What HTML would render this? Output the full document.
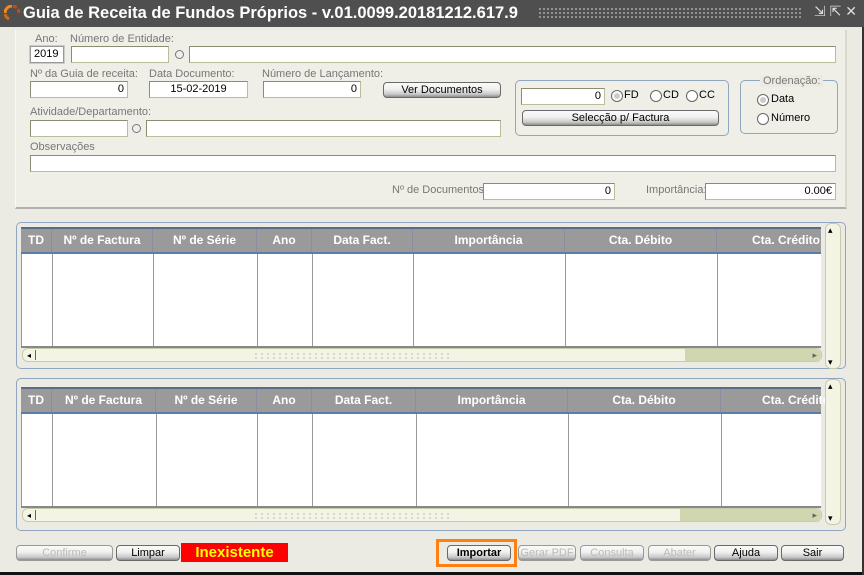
<!DOCTYPE html>
<html><head><meta charset="utf-8"><style>
*{box-sizing:border-box;margin:0;padding:0}
body{width:864px;height:575px;overflow:hidden;background:#ecebe3;font-family:"Liberation Sans",sans-serif;font-size:11px;color:#000;position:relative}
.a{position:absolute}
.tb{left:0;top:0;width:864px;height:27px;background:#4f4f4f;color:#fff}
.lbl{position:absolute;font-size:11px;color:#777}
.in{position:absolute;background:#fff;border:1px solid #b9bd99;border-top-color:#8a8d70;border-left-color:#8a8d70;height:17px;font-size:11px;text-align:right;padding:1px 3px;line-height:13px}
.btn{position:absolute;height:16px;border:1px solid #6a6a6a;border-radius:4px;background:linear-gradient(#fafafa 0%,#f0f0f0 45%,#c8c8c8 80%,#8d8d8d 100%);text-align:center;font-size:11px;line-height:14px}
.dis{color:#bbb;border-color:#999}
.circ{position:absolute;width:9px;height:9px;border:1px solid #777;border-radius:50%;background:#eee}
.rad{position:absolute;width:12px;height:12px;border:1px solid #666;border-radius:50%;background:#fff}
.rad.on::after{content:"";position:absolute;left:2px;top:2px;width:6px;height:6px;border-radius:50%;background:#ccc}
.grp{position:absolute;border:1px solid #8fa5c0;border-radius:5px}
.hdr{position:absolute;background:#9a9a9a;color:#fff;font-weight:bold;font-size:12px;border-top:2px solid #5a6c88;border-bottom:2px solid #5a7eaa}
.hdr span{position:absolute;text-align:center;border-right:1px solid #8a8fa0;height:23px;top:0;line-height:22px}
.body{position:absolute;background:#fff;border-bottom:2px solid #888}
.body i{position:absolute;top:0;bottom:0;width:1px;background:#999}
.hs{position:absolute;background:#f4f4e4;border:1px solid #c8cba8;border-radius:6px}
.vs{position:absolute;background:#f4f4e4;border:1px solid #c8cba8;border-radius:6px}
</style></head><body>
<div class="a tb">
 <svg class="a" style="left:4px;top:5px" width="16" height="16" viewBox="0 0 16 16"><path d="M8 1 A7 7 0 0 0 1 8" stroke="#f08a20" stroke-width="3" fill="none"/><path d="M15 8 A7 7 0 0 0 8 1" stroke="#c05010" stroke-width="3" fill="none" stroke-dasharray="4 2"/><path d="M1 9 A7 7 0 0 0 5 14" stroke="#d06a18" stroke-width="3" fill="none"/></svg>
 <div class="a" style="left:23px;top:4px;font-family:'Liberation Sans',sans-serif;font-weight:bold;font-size:16.5px;letter-spacing:0px;white-space:nowrap">Guia de Receita de Fundos Próprios - v.01.0099.20181212.617.9</div>
 <div class="a" style="left:538px;top:7px;width:265px;height:12px;background-image:radial-gradient(#aaa 0.8px,transparent 1px);background-size:4px 4px"></div>
 <div class="a" style="left:814px;top:3px;font-size:14px;color:#ddd">⇲ ⇱ ✕</div>
</div>
<div class="a" style="left:15px;top:30px;width:832px;height:179px;background:#efeee7;border-left:1px solid #fafaf5;border-bottom:2px solid #b0b0b0;border-right:2px solid #d8d8d0"></div>

<div class="lbl" style="left:35px;top:33px">Ano:</div>
<div class="lbl" style="left:70px;top:33px">Número de Entidade:</div>
<div class="in" style="left:30px;top:46px;width:34px;text-align:left;border:1px solid #999;outline:1px solid #ccc">2019</div>
<div class="in" style="left:71px;top:46px;width:98px"></div>
<div class="circ" style="left:175px;top:50px"></div>
<div class="in" style="left:189px;top:46px;width:647px"></div>

<div class="lbl" style="left:30px;top:68px">Nº da Guia de receita:</div>
<div class="lbl" style="left:149px;top:68px">Data Documento:</div>
<div class="lbl" style="left:262px;top:68px">Número de Lançamento:</div>
<div class="in" style="left:30px;top:81px;width:98px">0</div>
<div class="in" style="left:149px;top:81px;width:99px;text-align:center">15-02-2019</div>
<div class="in" style="left:263px;top:81px;width:98px">0</div>
<div class="btn" style="left:383px;top:82px;width:118px">Ver Documentos</div>

<div class="grp" style="left:515px;top:80px;width:214px;height:56px"></div>
<div class="in" style="left:521px;top:88px;width:84px">0</div>
<div class="rad on" style="left:611px;top:90px"></div><div class="a" style="left:624px;top:89px">FD</div>
<div class="rad" style="left:650px;top:90px"></div><div class="a" style="left:663px;top:89px">CD</div>
<div class="rad" style="left:686px;top:90px"></div><div class="a" style="left:699px;top:89px">CC</div>
<div class="btn" style="left:522px;top:110px;width:197px">Selecção p/ Factura</div>

<div class="grp" style="left:740px;top:80px;width:98px;height:54px"></div>
<div class="a" style="left:760px;top:75px;background:#ecebe3;padding:0 3px;color:#777;font-size:11px">Ordenação:</div>
<div class="rad on" style="left:757px;top:94px"></div><div class="a" style="left:771px;top:93px">Data</div>
<div class="rad" style="left:757px;top:113px"></div><div class="a" style="left:771px;top:112px">Número</div>

<div class="lbl" style="left:30px;top:106px">Atividade/Departamento:</div>
<div class="in" style="left:30px;top:120px;width:98px"></div>
<div class="circ" style="left:132px;top:124px"></div>
<div class="in" style="left:146px;top:120px;width:355px"></div>

<div class="lbl" style="left:30px;top:141px">Observações</div>
<div class="in" style="left:30px;top:155px;width:806px"></div>

<div class="lbl" style="left:392px;top:184px">Nº de Documentos</div>
<div class="in" style="left:483px;top:183px;width:132px">0</div>
<div class="lbl" style="left:646px;top:184px">Importância:</div>
<div class="in" style="left:705px;top:183px;width:131px">0.00€</div>

<!-- table 1 -->
<div class="grp" style="left:16px;top:222px;width:830px;height:147px"></div>
<div class="hdr" style="left:21px;top:227px;width:800px;height:27px">
<span style="left:0;width:31px">TD</span><span style="left:31px;width:101px">Nº de Factura</span><span style="left:132px;width:104px">Nº de Série</span><span style="left:236px;width:55px">Ano</span><span style="left:291px;width:101px">Data Fact.</span><span style="left:392px;width:152px">Importância</span><span style="left:544px;width:152px">Cta. Débito</span><span style="left:696px;width:130px;text-align:left;padding-left:35px;border:0">Cta. Crédito</span></div>
<div class="body" style="left:21px;top:254px;width:800px;height:94px"><i style="left:0"></i><i style="left:31px"></i><i style="left:132px"></i><i style="left:236px"></i><i style="left:291px"></i><i style="left:392px"></i><i style="left:544px"></i><i style="left:696px"></i></div>
<div class="hs" style="left:22px;top:348px;width:800px;height:14px"><div class="a" style="left:4px;top:2px;font-size:8px">◂</div><div class="a" style="left:12px;top:1px;width:1px;height:10px;background:#666"></div><div class="a" style="left:662px;top:0;right:0;bottom:0;background:#d0d6b0;border-radius:0 6px 6px 0"></div><div class="a" style="left:230px;top:3px;width:200px;height:7px;background-image:radial-gradient(#aaa 0.7px,transparent 1px);background-size:6px 4px"></div><div class="a" style="right:4px;top:1px;font-size:9px;color:#666">▸</div></div>
<div class="vs" style="left:825px;top:223px;width:16px;height:146px"><div class="a" style="left:2px;top:1px;font-size:9px">▴</div><div class="a" style="left:2px;bottom:0px;font-size:9px">▾</div></div>

<!-- table 2 -->
<div class="grp" style="left:16px;top:378px;width:830px;height:153px"></div>
<div class="hdr" style="left:21px;top:387px;width:800px;height:27px">
<span style="left:0;width:31px">TD</span><span style="left:31px;width:104px">Nº de Factura</span><span style="left:135px;width:101px">Nº de Série</span><span style="left:236px;width:55px">Ano</span><span style="left:291px;width:104px">Data Fact.</span><span style="left:395px;width:152px">Importância</span><span style="left:547px;width:153px">Cta. Débito</span><span style="left:700px;width:130px;text-align:left;padding-left:41px;border:0">Cta. Crédito</span></div>
<div class="body" style="left:21px;top:414px;width:800px;height:94px"><i style="left:0"></i><i style="left:31px"></i><i style="left:135px"></i><i style="left:236px"></i><i style="left:291px"></i><i style="left:395px"></i><i style="left:547px"></i><i style="left:700px"></i></div>
<div class="hs" style="left:22px;top:508px;width:800px;height:14px"><div class="a" style="left:4px;top:2px;font-size:8px">◂</div><div class="a" style="left:12px;top:1px;width:1px;height:10px;background:#666"></div><div class="a" style="left:657px;top:0;right:0;bottom:0;background:#d0d6b0;border-radius:0 6px 6px 0"></div><div class="a" style="left:230px;top:3px;width:200px;height:7px;background-image:radial-gradient(#aaa 0.7px,transparent 1px);background-size:6px 4px"></div><div class="a" style="right:4px;top:1px;font-size:9px;color:#666">▸</div></div>
<div class="vs" style="left:825px;top:379px;width:16px;height:146px"><div class="a" style="left:2px;top:1px;font-size:9px">▴</div><div class="a" style="left:2px;bottom:0px;font-size:9px">▾</div></div>

<!-- bottom -->
<div class="btn dis" style="left:16px;top:545px;width:97px">Confirme</div>
<div class="btn" style="left:116px;top:545px;width:64px">Limpar</div>
<div class="a" style="left:181px;top:543px;width:107px;height:19px;background:#ff0000;color:#ffff00;font-weight:bold;font-size:15px;text-align:center;line-height:19px">Inexistente</div>
<div class="a" style="left:436px;top:539px;width:81px;height:28px;border:3px solid #ff8010"></div>
<div class="btn" style="left:447px;top:545px;width:64px;font-weight:bold">Importar</div>
<div class="btn dis" style="left:518px;top:545px;width:58px">Gerar PDF</div>
<div class="btn dis" style="left:580px;top:545px;width:64px">Consulta</div>
<div class="btn dis" style="left:648px;top:545px;width:63px">Abater</div>
<div class="btn" style="left:714px;top:545px;width:64px">Ajuda</div>
<div class="btn" style="left:781px;top:545px;width:63px">Sair</div>
<div class="a" style="left:0;top:572px;width:864px;height:3px;background:#111"></div>
<div class="a" style="left:862px;top:27px;width:2px;height:548px;background:#333"></div>
</body></html>
